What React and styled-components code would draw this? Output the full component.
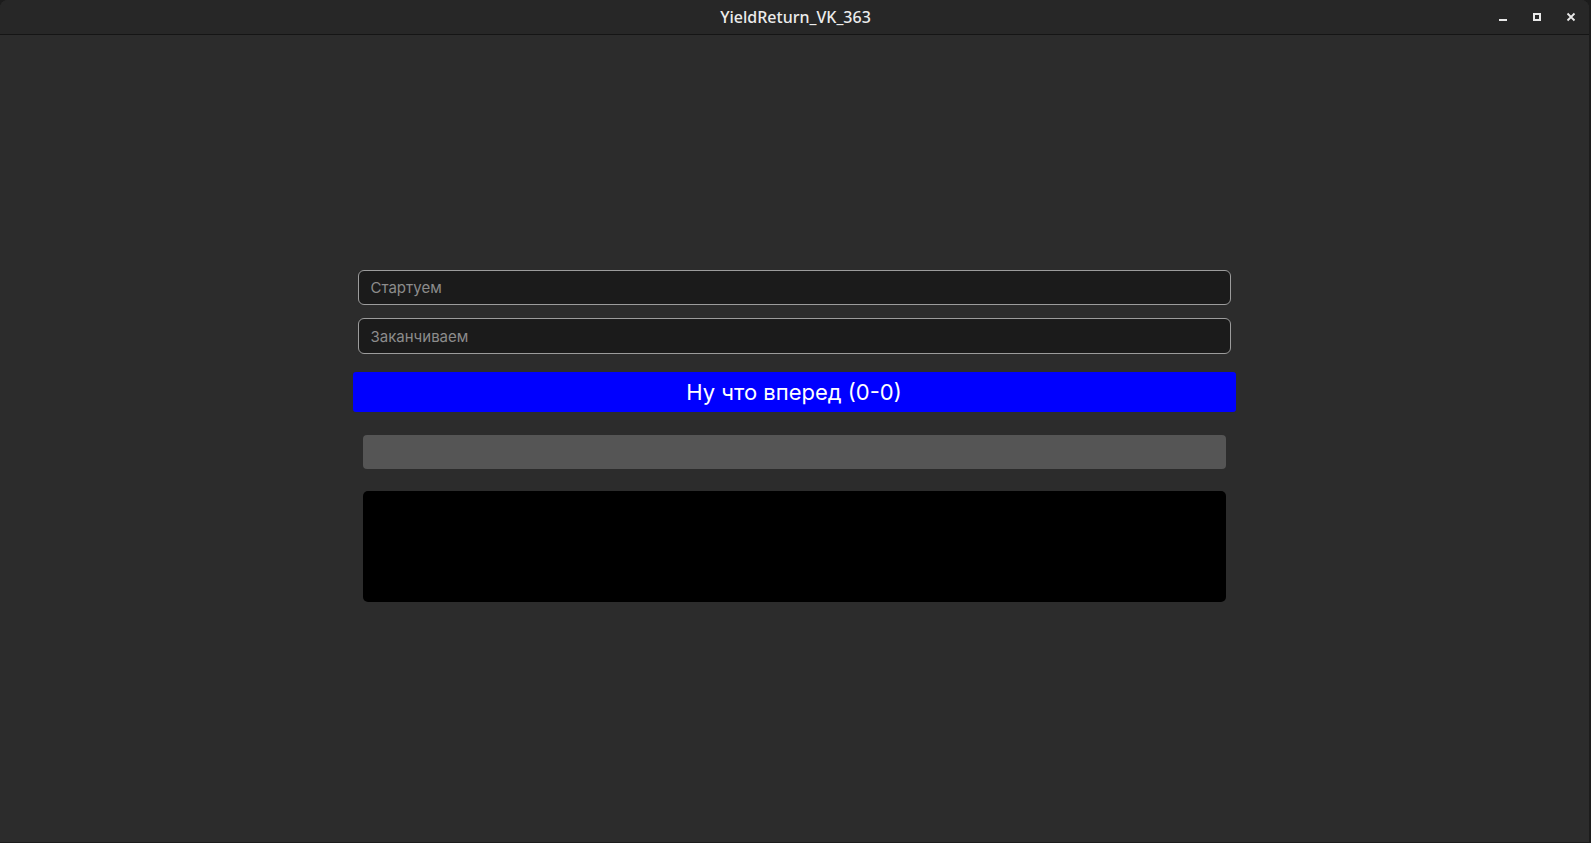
import React, { useState } from 'react';
import styled, { createGlobalStyle } from 'styled-components';

const GlobalStyle = createGlobalStyle`
  html, body {
    margin: 0;
    padding: 0;
    background: #1c1c1c;
  }
  * { box-sizing: border-box; }
`;

const Window = styled.div`
  width: 1589px;
  height: 842px;
  display: flex;
  flex-direction: column;
  background: #2c2c2c;
  border-top-right-radius: 8px;
  border-top-left-radius: 8px;
  overflow: hidden;
`;

const TitleBar = styled.div`
  height: 35px;
  flex: none;
  position: relative;
  display: flex;
  align-items: center;
  justify-content: center;
  background: #272727;
  border-bottom: 1px solid #151515;
`;

const Title = styled.div`
  font-family: "Noto Sans", "DejaVu Sans", sans-serif;
  font-size: 16px;
  font-weight: 500;
  color: #ececec;
  margin-top: -1px;
  margin-left: 2px;
`;

const Controls = styled.div`
  position: absolute;
  right: 0;
  top: 0;
  height: 34px;
  display: flex;
  align-items: center;
  padding-right: 1px;
`;

const CtrlBtn = styled.div`
  width: 34px;
  height: 34px;
  display: flex;
  align-items: center;
  justify-content: center;
`;

const Content = styled.div`
  flex: 1;
  display: flex;
  justify-content: center;
  padding-top: 235px;
`;

const Form = styled.div`
  width: 883px;
  margin-left: -1px;
  display: flex;
  flex-direction: column;
`;

const Field = styled.input`
  margin: 0 5px 13px;
  height: ${p => p.$h || 35}px;
  padding: 0 12px;
  background: #1b1b1b;
  border: 1px solid #9c9c9c;
  border-radius: 6px;
  color: #e0e0e0;
  font-family: Inter, "Noto Sans", sans-serif;
  font-size: 15px;
  outline: none;
  &::placeholder {
    color: #8c8c8c;
  }
`;

const GoButton = styled.button`
  margin-top: 5px;
  height: 40px;
  border: none;
  border-radius: 3px;
  background: #0000ff;
  color: #ffffff;
  font-family: Inter, "Noto Sans", sans-serif;
  font-size: 22px;
  cursor: pointer;
`;

const Bar = styled.div`
  margin: ${p => p.$top}px 10px 0;
  height: ${p => p.$h}px;
  background: ${p => p.$bg};
  border-radius: ${p => p.$r}px;
`;

const Minimize = () => (
  <svg width="10" height="10" viewBox="0 0 10 10">
    <rect x="1" y="7" width="8" height="2" fill="#e8e8e8" />
  </svg>
);

const Maximize = () => (
  <svg width="10" height="10" viewBox="0 0 10 10">
    <rect x="2" y="2" width="6" height="6" fill="none" stroke="#e8e8e8" strokeWidth="2" />
  </svg>
);

const Close = () => (
  <svg width="10" height="10" viewBox="0 0 10 10">
    <path d="M1.5 1.5 L8.5 8.5 M8.5 1.5 L1.5 8.5" stroke="#e8e8e8" strokeWidth="1.8" />
  </svg>
);

const App = () => {
  const [from, setFrom] = useState('');
  const [to, setTo] = useState('');

  return (
    <Window>
      <GlobalStyle />
      <TitleBar>
        <Title>YieldReturn_VK_363</Title>
        <Controls>
          <CtrlBtn><Minimize /></CtrlBtn>
          <CtrlBtn><Maximize /></CtrlBtn>
          <CtrlBtn><Close /></CtrlBtn>
        </Controls>
      </TitleBar>
      <Content>
        <Form>
          <Field placeholder="Стартуем" value={from} onChange={e => setFrom(e.target.value)} />
          <Field $h={36} placeholder="Заканчиваем" value={to} onChange={e => setTo(e.target.value)} />
          <GoButton>Ну что вперед (0-0)</GoButton>
          <Bar $top={23} $h={34} $bg="#555555" $r={4} />
          <Bar $top={22} $h={111} $bg="#000000" $r={5} />
        </Form>
      </Content>
    </Window>
  );
};

export default App;
